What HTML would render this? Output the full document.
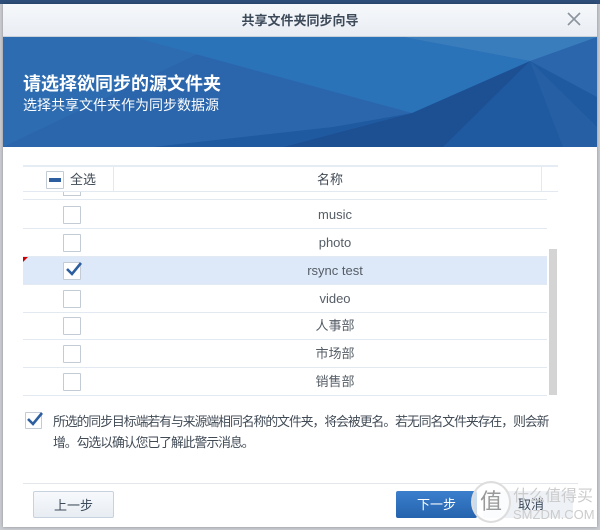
<!DOCTYPE html>
<html><head><meta charset="utf-8"><style>
*{margin:0;padding:0;box-sizing:border-box}
body{width:600px;height:530px;background:#c9ccd1;position:relative;overflow:hidden;font-family:"Liberation Sans","Noto Sans CJK SC",sans-serif;color:#404a55}
.topline{position:absolute;left:0;top:0;width:600px;height:4px;background:#2f4f7a}
.dlg{position:absolute;left:3px;top:4px;width:594px;height:523px;background:#fff;box-shadow:0 0 3px rgba(0,0,0,.3)}
.tb{position:absolute;left:0;top:0;width:594px;height:33px;background:linear-gradient(#f6f8fb,#e9edf3);border-bottom:1px solid #c8d0da;text-align:center;font-size:13px;font-weight:bold;line-height:33px;color:#3d4a5a}
.x{position:absolute;right:14px;top:6px;width:18px;height:18px}
.ban{position:absolute;left:0;top:33px;width:594px;height:110px;overflow:hidden;background:#2d6cb1}
.ban h1{position:absolute;left:20px;top:33px;font-size:18px;color:#fff;font-weight:bold}
.ban p{position:absolute;left:20px;top:58px;font-size:14px;color:#fff}
.a{position:absolute;white-space:nowrap}
.cb{position:absolute;width:18px;height:18px;border:1px solid #c3cbd5;background:#fff;border-radius:1px}
.row{position:absolute;left:20px;width:524px;height:28px;border-bottom:1px solid #e3e9f1;font-size:13px;text-align:center;line-height:27px;padding-left:100px;color:#555d66}
.btn{position:absolute;height:27px;font-size:13px;text-align:center;line-height:27px;border-radius:2px}
</style></head><body>
<div class="topline"></div>
<div class="dlg">
<div class="tb">共享文件夹同步向导
<svg class="x" viewBox="0 0 18 18"><path d="M3 3L15 15M15 3L3 15" stroke="#8c949e" stroke-width="1.6"/></svg></div>
<div class="ban">
<svg class="a" style="left:0;top:0" width="594" height="110">
<polygon points="230,0 594,0 594,110 0,110" fill="#2b66ad"/>
<polygon points="400,0 527,24 594,0" fill="#3a7dbd"/>
<polygon points="527,24 409,76 320,110 594,110 594,60" fill="#1f5aa0"/>
<polygon points="527,24 409,76 280,110 440,110" fill="#1d4f93"/>
<polygon points="130,0 400,0 527,24 409,76" fill="#2a73b9"/>
<polygon points="409,76 330,90 150,110 280,110" fill="#1f5aa0"/>
<polygon points="527,24 594,90 594,110 560,110" fill="#265fa3"/>
</svg>
<h1>请选择欲同步的源文件夹</h1>
<p>选择共享文件夹作为同步数据源</p>
</div>
<div class="a" style="left:20px;top:161px;width:535px;height:27px;border-top:2px solid #e6ecf3;border-bottom:1px solid #e3e9f1"></div>
<div class="a" style="left:110px;top:163px;width:1px;height:25px;background:#e3e9f1"></div>
<div class="a" style="left:538px;top:163px;width:1px;height:25px;background:#e3e9f1"></div>
<div class="cb" style="left:43px;top:167px;"><div class="a" style="left:2px;top:6px;width:12px;height:4px;background:#2d5fa0"></div></div>
<div class="a" style="left:67px;top:167px;font-size:13px;line-height:18px">全选</div>
<div class="a" style="left:327px;top:167px;font-size:13px;line-height:18px;transform:translateX(-50%)">名称</div>
<div class="a" style="left:60px;top:188px;width:18px;height:4px;border:1px solid #c3cbd5;border-top:none"></div>
<div class="row" style="top:168px;background:transparent"></div>
<div class="row" style="top:197px">music</div>
<div class="row" style="top:225px">photo</div>
<div class="row" style="top:253px;background:#dde9f8">rsync test</div>
<div class="row" style="top:281px">video</div>
<div class="row" style="top:308px">人事部</div>
<div class="row" style="top:336px">市场部</div>
<div class="row" style="top:364px">销售部</div>
<div class="cb" style="left:60px;top:202px"></div>
<div class="cb" style="left:60px;top:230px"></div>
<div class="cb" style="left:60px;top:258px"><svg class="a" style="left:1px;top:-3px" width="18" height="18" viewBox="0 0 18 18"><path d="M2 9L7 14L16 3" stroke="#2d5fa0" stroke-width="2.6" fill="none"/></svg></div>
<div class="cb" style="left:60px;top:286px"></div>
<div class="cb" style="left:60px;top:313px"></div>
<div class="cb" style="left:60px;top:341px"></div>
<div class="cb" style="left:60px;top:369px"></div>
<div class="a" style="left:20px;top:253px;width:0;height:0;border-top:5px solid #c00;border-right:5px solid transparent"></div>
<div class="a" style="left:546px;top:245px;width:8px;height:146px;background:#d4d4d4"></div>
<div class="cb" style="left:22px;top:408px;width:17px;height:17px"><svg class="a" style="left:0;top:-3px" width="18" height="18" viewBox="0 0 18 18"><path d="M2 9L7 14L16 3" stroke="#2d5fa0" stroke-width="2.6" fill="none"/></svg></div>
<div style="position:absolute;left:50px;top:407px;white-space:nowrap;font-size:12.8px;line-height:21px;letter-spacing:-1px">所选的同步目标端若有与来源端相同名称的文件夹，将会被更名。若无同名文件夹存在，则会新<br>增。勾选以确认您已了解此警示消息。</div>
<div class="a" style="left:20px;top:479px;width:555px;height:1px;background:#e3e7ec"></div>
<div class="btn" style="left:30px;top:487px;width:81px;border:1px solid #c8d2de;background:linear-gradient(#f7f9fc,#e8edf3);color:#3d4a5a">上一步</div>
<div class="btn" style="left:393px;top:487px;width:81px;background:linear-gradient(#3b7fcc,#2563ae);color:#fff">下一步</div>
<div class="btn" style="left:480px;top:487px;width:90px;color:#3d4a5a;text-align:left;padding-left:35px;background:#eef1f5">取消</div>
<div class="a" style="left:468px;top:477px;width:40px;height:42px;border-radius:50%;border:2px solid #ddd;background:rgba(255,255,255,.75);font-size:22px;text-align:center;line-height:38px;color:#999">值</div>
<div class="a" style="left:510px;top:478px;font-size:16px;color:#ccc">什么值得买</div>
<div class="a" style="left:510px;top:503px;font-size:13px;color:#ccc">SMZDM.COM</div>
</div>
</body></html>
